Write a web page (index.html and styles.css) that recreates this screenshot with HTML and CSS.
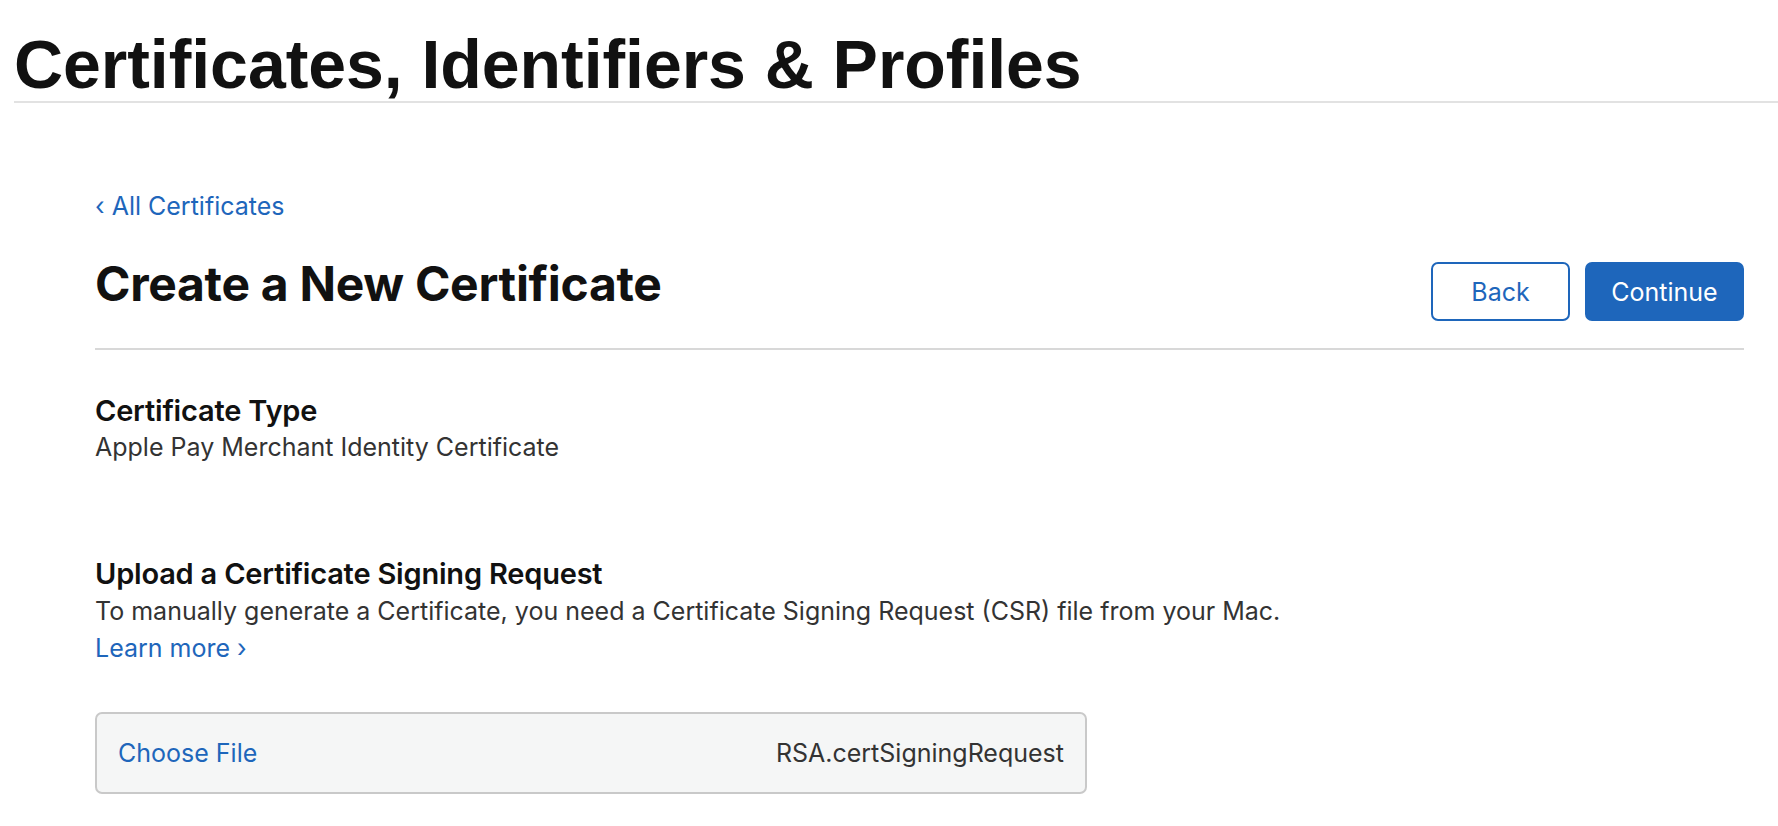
FILE: index.html
```html
<!DOCTYPE html>
<html lang="en">
<head>
<meta charset="utf-8">
<title>Create a New Certificate</title>
<link rel="stylesheet" href="styles.css">
</head>
<body>
<header class="site-header">
  <h1 class="site-title">Certificates, Identifiers &amp; Profiles</h1>
</header>
<main class="content">
  <a class="back-link" href="#"><span class="chev">‹</span> All Certificates</a>
  <div class="title-row">
    <h2 class="page-title">Create a New Certificate</h2>
    <div class="actions">
      <button class="btn btn-secondary" type="button">Back</button>
      <button class="btn btn-primary" type="button">Continue</button>
    </div>
  </div>
  <section class="section section-type">
    <h3 class="section-title">Certificate Type</h3>
    <p class="section-text">Apple Pay Merchant Identity Certificate</p>
  </section>
  <section class="section section-upload">
    <h3 class="section-title">Upload a Certificate Signing Request</h3>
    <p class="section-text desc">To manually generate a Certificate, you need a Certificate Signing Request (CSR) file from your Mac.</p>
    <a class="learn-more" href="#">Learn more <span class="chev">›</span></a>
    <div class="file-box">
      <span class="choose">Choose File</span>
      <span class="file-name">RSA.certSigningRequest</span>
    </div>
  </section>
</main>
</body>
</html>
```

FILE: styles.css
```css
* { box-sizing: border-box; }
html, body { margin: 0; padding: 0; background: #fff; }
body {
  font-family: Inter, "Noto Sans", "Liberation Sans", sans-serif;
  color: #1d1d1f;
  overflow: hidden;
}
.site-header {
  margin-left: 14px;
  padding-top: 30px;
  padding-bottom: 3px;
  border-bottom: 2px solid #e2e2e2;
}
.site-title {
  margin: 0;
  font-family: "Liberation Sans", Arial, sans-serif;
  font-weight: 700;
  font-size: 68px;
  line-height: 68px;
  color: #111;
  letter-spacing: -0.05px;
}
.content {
  padding: 0 34px 0 95px;
}
.back-link {
  display: block;
  margin-top: 88px;
  font-size: 25px;
  line-height: 30px;
  color: #1e66bb;
  text-decoration: none;
}
.title-row {
  display: flex;
  justify-content: space-between;
  align-items: flex-start;
  margin-top: 34px;
  padding-bottom: 27px;
  border-bottom: 2px solid #d8d8d8;
}
.page-title {
  margin: 0;
  font-size: 48px;
  font-weight: 700;
  line-height: 58px;
  color: #111;
  letter-spacing: -0.3px;
}
.actions {
  display: flex;
  gap: 15px;
  margin-top: 7px;
}
.btn {
  height: 59px;
  border-radius: 7px;
  font-family: inherit;
  font-size: 25px;
  padding: 0;
  cursor: pointer;
}
.btn-secondary {
  width: 139px;
  background: #fff;
  border: 2px solid #1e66bb;
  color: #1e66bb;
}
.btn-primary {
  width: 159px;
  background: #1e66bb;
  border: 2px solid #1e66bb;
  color: #fff;
}
.section { margin: 0; }
.section-type { margin-top: 43px; }
.section-upload { margin-top: 93px; }
.section-title {
  margin: 0;
  font-size: 29px;
  font-weight: 600;
  line-height: 35px;
  color: #111;
  letter-spacing: -0.2px;
}
.section-text {
  margin: 3px 0 0;
  font-size: 25px;
  line-height: 32px;
  color: #333;
}
.section-text.desc {
  margin-top: 2px;
  line-height: 37px;
}
.learn-more {
  display: block;
  font-size: 25px;
  line-height: 37px;
  color: #1e66bb;
  text-decoration: none;
}
.file-box {
  display: flex;
  justify-content: space-between;
  align-items: center;
  width: 992px;
  height: 82px;
  margin-top: 45px;
  padding: 0 21px;
  background: #f5f6f6;
  border: 2px solid #c9c9c9;
  border-radius: 7px;
  font-size: 25px;
}
.choose { color: #1e66bb; }
.file-name { color: #333; }
```
